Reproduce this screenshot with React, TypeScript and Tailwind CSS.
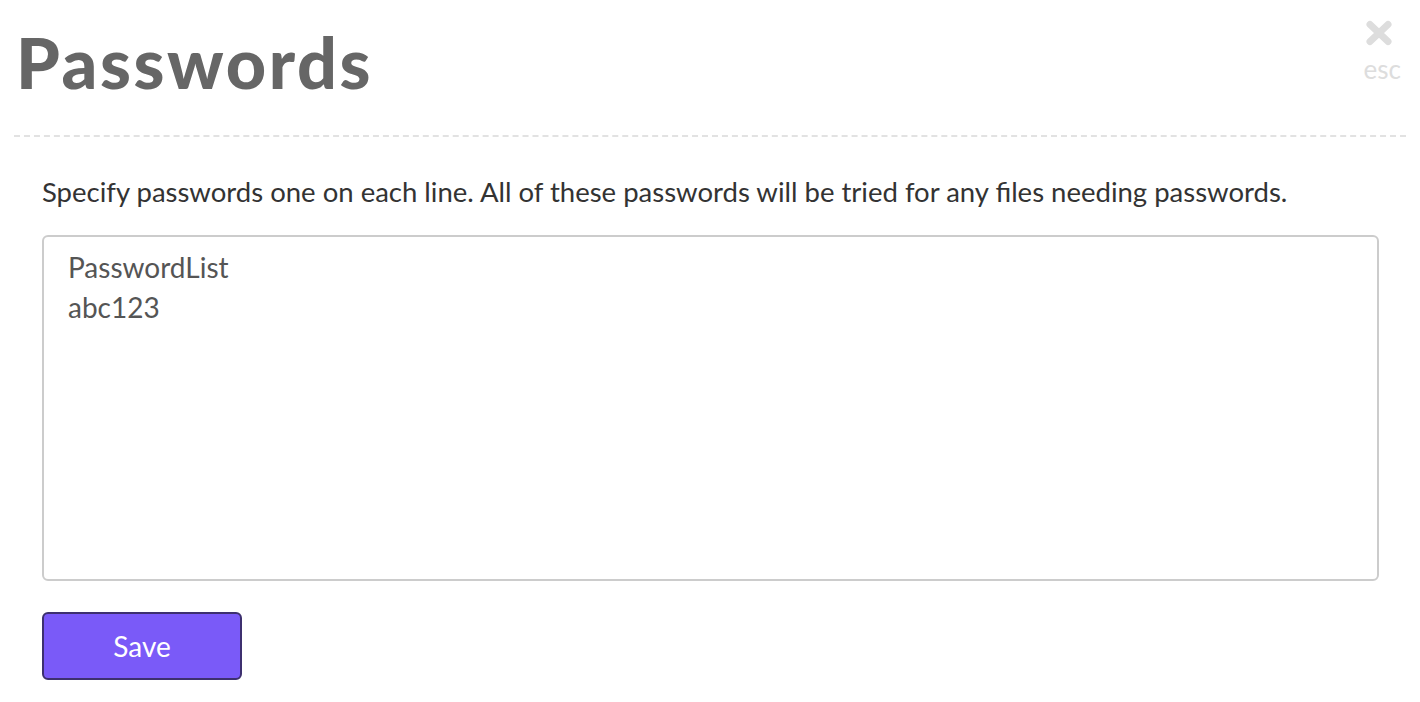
export default function App() {
  return (
    <div className="min-h-[702px] bg-white" style={{ fontFamily: "Lato, 'Open Sans', sans-serif" }}>
      <header className="flex items-start justify-between pl-4 pr-[19px] pt-[20px] pb-[38px]">
        <h1 className="mt-[7px] text-[70px] leading-none font-black tracking-[2.6px] text-[#666]">
          Passwords
        </h1>
        <div className="flex flex-col items-center text-[#ddd]">
          <svg width="28" height="26" viewBox="0 0 28 26">
            <path d="M5 4.5 L23 21.5 M23 4.5 L5 21.5" stroke="#dddddd" strokeWidth="7" strokeLinecap="round" />
          </svg>
          <span className="mt-[10px] text-[26px] leading-none pl-[6px]">esc</span>
        </div>
      </header>
      <div className="mx-[14px] border-t-2 border-dashed border-[#e2e2e2]" />
      <main className="pl-[42px] pr-[41px] pt-[39px]">
        <p className="text-[27.5px] leading-[32px] text-[#333]">
          Specify passwords one on each line. All of these passwords will be tried for any files needing passwords.
        </p>
        <textarea
          className="mt-[27px] block w-full h-[346px] resize-none rounded-md border-2 border-[#cccccc] px-[24px] pt-[10px] text-[28px] leading-[40px] text-[#555] outline-none"
          defaultValue={"PasswordList\nabc123"}
        />
        <button className="mt-[31px] w-[200px] h-[68px] rounded-md border-2 border-[#3d306f] bg-[#7a5af8] text-white text-[28px]">
          Save
        </button>
      </main>
    </div>
  );
}
